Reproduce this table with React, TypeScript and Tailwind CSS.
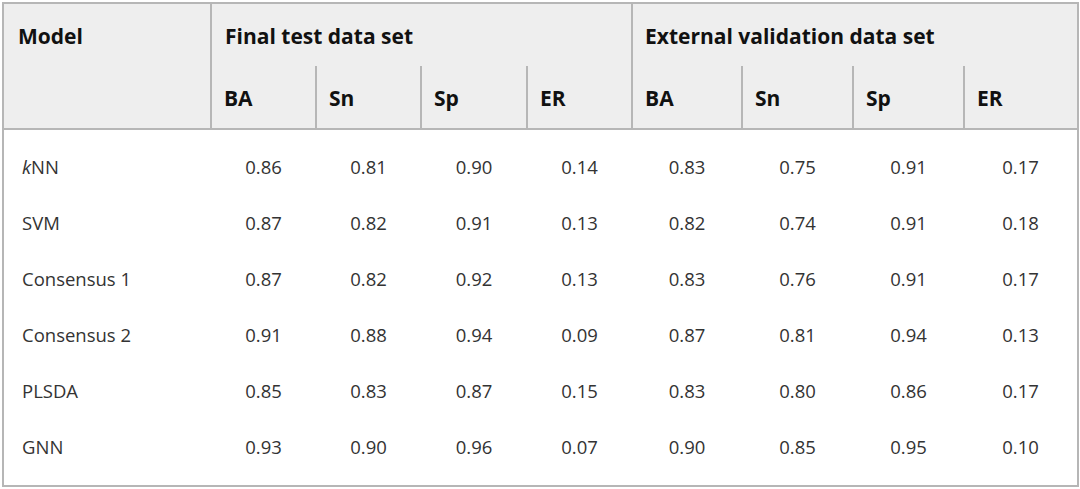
const cols = ['BA', 'Sn', 'Sp', 'ER'];

type Row = {
  model: React.ReactNode;
  values: string[];
};

const rows: Row[] = [
  {
    model: (
      <>
        <i>k</i>NN
      </>
    ),
    values: ['0.86', '0.81', '0.90', '0.14', '0.83', '0.75', '0.91', '0.17'],
  },
  { model: 'SVM', values: ['0.87', '0.82', '0.91', '0.13', '0.82', '0.74', '0.91', '0.18'] },
  { model: 'Consensus 1', values: ['0.87', '0.82', '0.92', '0.13', '0.83', '0.76', '0.91', '0.17'] },
  { model: 'Consensus 2', values: ['0.91', '0.88', '0.94', '0.09', '0.87', '0.81', '0.94', '0.13'] },
  { model: 'PLSDA', values: ['0.85', '0.83', '0.87', '0.15', '0.83', '0.80', '0.86', '0.17'] },
  { model: 'GNN', values: ['0.93', '0.90', '0.96', '0.07', '0.90', '0.85', '0.95', '0.10'] },
];

const widths = [208, 105, 105, 106, 105, 110, 111, 111, 114];

export default function App() {
  return (
    <div className="h-[489px] w-[1080px] bg-white pl-[2px] pt-[2px] font-['Open_Sans',sans-serif]">
      <table className="w-[1075px] table-fixed border-collapse border-2 border-[#b6b6b6]">
        <colgroup>
          {widths.map((w, i) => (
            <col key={i} style={{ width: w }} />
          ))}
        </colgroup>
        <thead className="bg-[#eeeeee] text-[21px] font-semibold text-[#111]">
          <tr className="h-[63px]">
            <th rowSpan={2} className="border-r-2 border-[#b6b6b6] px-[14px] pt-[17px] text-left align-top">
              Model
            </th>
            <th colSpan={4} className="border-r-2 border-[#b6b6b6] px-[13px] pt-[4px] text-left align-middle">
              Final test data set
            </th>
            <th colSpan={4} className="px-[12px] pt-[4px] text-left align-middle">
              External validation data set
            </th>
          </tr>
          <tr className="h-[63px] border-b-2 border-[#b6b6b6]">
            {[...cols, ...cols].map((c, i) => (
              <th
                key={i}
                className={
                  i === 7
                    ? 'px-[12px] pt-[4px] text-left align-middle'
                    : 'border-r-2 border-[#b6b6b6] px-[12px] pt-[4px] text-left align-middle'
                }
              >
                {c}
              </th>
            ))}
          </tr>
        </thead>
        <tbody className="text-[18.5px] text-[#333]">
          <tr className="h-[10px]">
            <td colSpan={9} />
          </tr>
          {rows.map((r, i) => (
            <tr key={i} className="h-[56px]">
              <td className="pl-[18px] text-left">{r.model}</td>
              {r.values.map((v, j) => (
                <td key={j} className="text-center">
                  {v}
                </td>
              ))}
            </tr>
          ))}
          <tr className="h-[11px]">
            <td colSpan={9} />
          </tr>
        </tbody>
      </table>
    </div>
  );
}
